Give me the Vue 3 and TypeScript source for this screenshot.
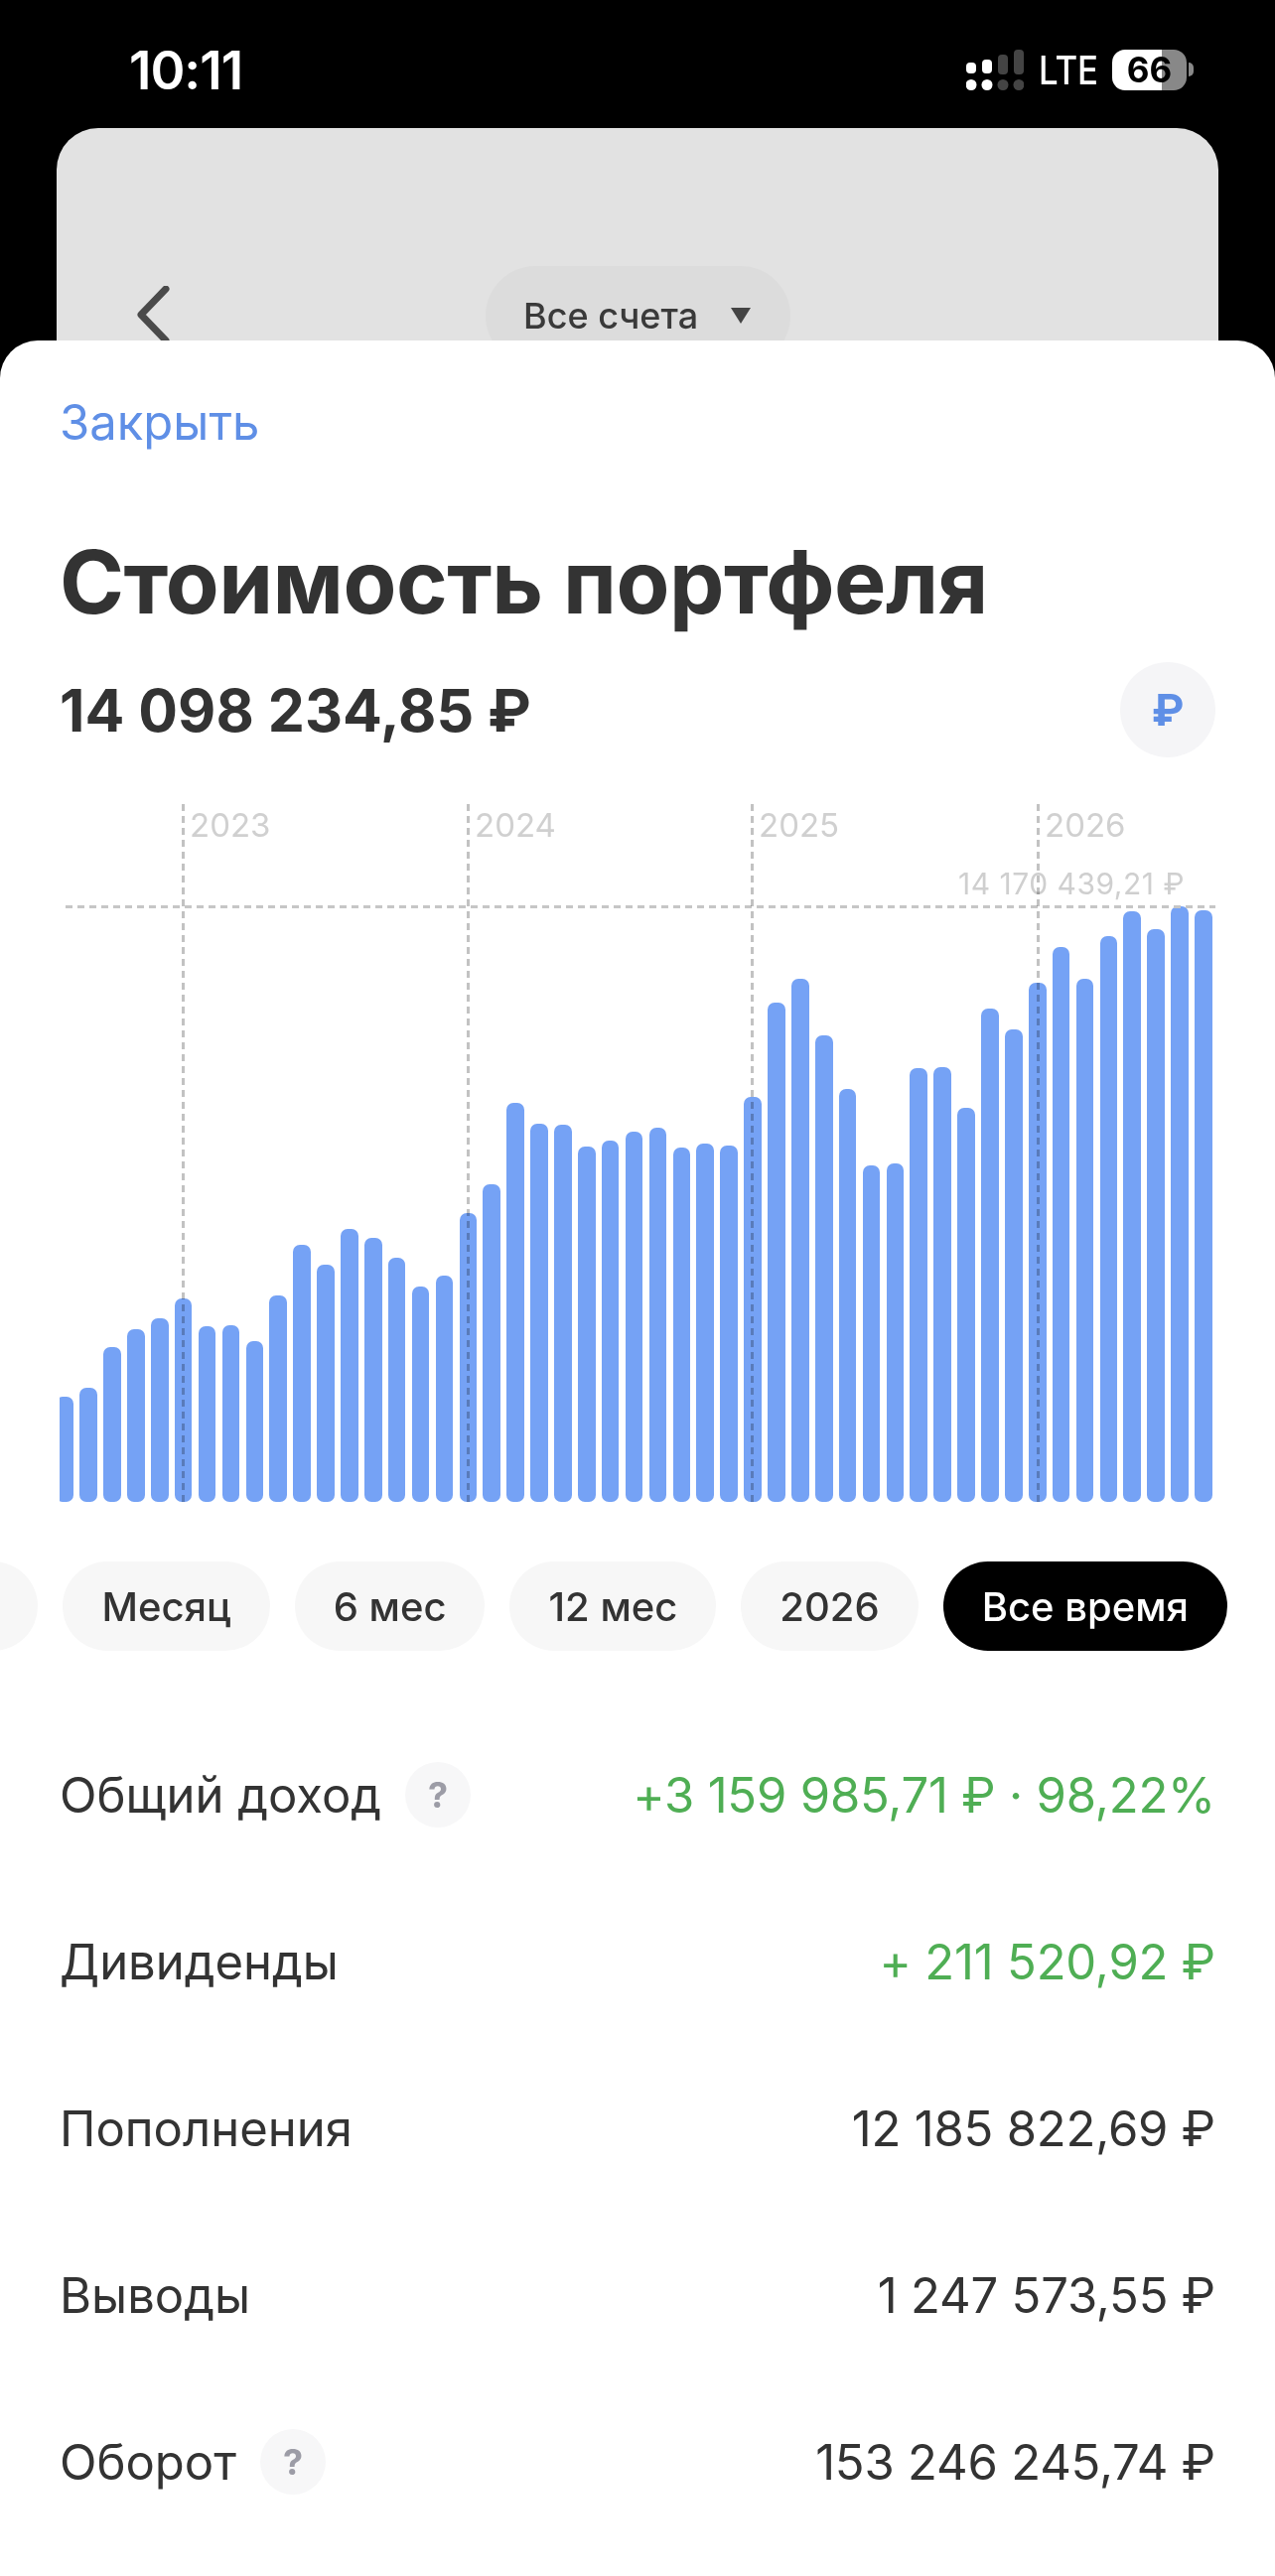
<script setup lang="ts">
const tops: number[] = [
  1322, 1302, 1213, 1172, 1148, 1106, 1167, 1165, 1198, 1098, 988, 1032, 953, 973, 1016, 1079, 1056,
  919, 856, 677, 722, 725, 773, 760, 739, 731, 775, 765, 769, 663, 456, 405, 529, 645, 814, 810, 600,
  599, 688, 470, 516, 412, 335, 405, 311, 257, 295, 246, 253
]
const bars = tops.map((t) => Math.round(((1552 - t) / 2.178) * 10) / 10)

const years = [
  { label: '2023', left: 123 },
  { label: '2024', left: 410 },
  { label: '2025', left: 696 },
  { label: '2026', left: 984 }
]

const periods = ['3 мес', 'Месяц', '6 мес', '12 мес', '2026']

const rows = [
  { label: 'Общий доход', value: '+3 159 985,71 ₽ · 98,22%', help: true, green: true },
  { label: 'Дивиденды', value: '+ 211 520,92 ₽', help: false, green: true },
  { label: 'Пополнения', value: '12 185 822,69 ₽', help: false, green: false },
  { label: 'Выводы', value: '1 247 573,55 ₽', help: false, green: false },
  { label: 'Оборот', value: '153 246 245,74 ₽', help: true, green: false }
]
</script>

<template>
  <div class="screen">
    <!-- Status bar -->
    <header class="status">
      <span class="time">10:11</span>
      <div class="status-right">
        <svg class="signal" width="58" height="41" viewBox="0 0 58 41">
          <rect x="0" y="13" width="10" height="11" rx="4" fill="#fff" />
          <rect x="16" y="10" width="10" height="14" rx="4" fill="#fff" />
          <rect x="32" y="5" width="10" height="20" rx="4" fill="#444" />
          <rect x="48" y="0" width="10" height="25" rx="4" fill="#444" />
          <circle cx="5" cy="35.5" r="5.5" fill="#fff" />
          <circle cx="21" cy="35.5" r="5.5" fill="#fff" />
          <circle cx="37" cy="35.5" r="5.5" fill="#444" />
          <circle cx="53" cy="35.5" r="5.5" fill="#444" />
        </svg>
        <span class="lte">LTE</span>
        <div class="battery">
          <span class="battery-num">66</span>
        </div>
        <span class="battery-nub"></span>
      </div>
    </header>

    <!-- Screen behind the sheet -->
    <div class="back-card">
      <svg class="back-icon" width="34" height="58" viewBox="0 0 34 58">
        <path d="M30 3 L5 29 L30 55" fill="none" stroke="#4a4a4a" stroke-width="7" stroke-linecap="round" stroke-linejoin="round" />
      </svg>
      <div class="account-pill">
        <span>Все счета</span>
        <i class="account-caret"></i>
      </div>
    </div>

    <main class="sheet">
      <a class="close">Закрыть</a>
      <h1 class="title">Стоимость портфеля</h1>

      <div class="amount-row">
        <span class="amount">14 098 234,85 ₽</span>
        <span class="currency">₽</span>
      </div>

      <!-- Chart -->
      <section class="chart">
        <div class="bars">
          <div v-for="(h, i) in bars" :key="i" class="bar" :style="{ height: h + 'px' }"></div>
        </div>
        <div class="peak-line"></div>
        <span class="peak-label">14 170 439,21 ₽</span>
        <template v-for="y in years" :key="y.label">
          <div class="year-line" :style="{ left: y.left + 'px' }"></div>
          <span class="year-label" :style="{ left: y.left + 8 + 'px' }">{{ y.label }}</span>
        </template>
      </section>

      <!-- Period filter -->
      <div class="periods">
        <button v-for="p in periods" :key="p" class="period">{{ p }}</button>
        <button class="period period-active">Все время</button>
      </div>

      <!-- Stats -->
      <div class="stats">
        <div v-for="row in rows" :key="row.label" class="stat-row">
          <div class="stat-label">
            <span>{{ row.label }}</span>
            <span v-if="row.help" class="help">?</span>
          </div>
          <span class="stat-value" :class="{ green: row.green }">{{ row.value }}</span>
        </div>
      </div>
    </main>
  </div>
</template>

<style>
html,
body {
  margin: 0;
  background: #000;
}
</style>

<style scoped>
.screen {
  position: relative;
  width: 1284px;
  height: 2595px;
  overflow: hidden;
  background: #000;
  font-family: Inter, "Liberation Sans", sans-serif;
  color: #333;
}

/* status bar */
.status {
  height: 129px;
  box-sizing: border-box;
  padding: 42px 82px 0 130px;
  display: flex;
  justify-content: space-between;
  align-items: flex-start;
  color: #fff;
}

.time {
  font-size: 53px;
  line-height: 58px;
  font-weight: 600;
  letter-spacing: -1px;
}

.status-right {
  display: flex;
  align-items: flex-start;
  margin-top: 8px;
}

.lte {
  margin-left: 15px;
  width: 57px;
  font-size: 40px;
  line-height: 41px;
  font-weight: 500;
  transform: scaleX(0.87);
  transform-origin: left center;
}

.battery {
  margin-left: 17px;
  width: 75px;
  height: 41px;
  border-radius: 13px;
  background: linear-gradient(90deg, #fff 0 50px, #888 50px);
  display: flex;
  align-items: center;
  justify-content: center;
}

.battery-num {
  color: #000;
  font-size: 35px;
  font-weight: 700;
  line-height: 41px;
}

.battery-nub {
  margin: 13px 0 0 2px;
  width: 5px;
  height: 14px;
  border-radius: 0 7px 7px 0;
  background: #888;
}

/* card behind */
.back-card {
  position: relative;
  margin: 0 57px;
  height: 300px;
  background: #e2e2e2;
  border-radius: 42px 42px 0 0;
}

.back-icon {
  position: absolute;
  left: 80px;
  top: 159px;
}

.account-pill {
  position: absolute;
  left: 432px;
  top: 139px;
  width: 307px;
  height: 100px;
  box-sizing: border-box;
  padding: 0 40px 0 38px;
  border-radius: 50px;
  background: #dcdcdc;
  display: flex;
  align-items: center;
  justify-content: space-between;
  font-size: 36px;
  font-weight: 500;
  color: #3a3a3a;
}

.account-caret {
  width: 0;
  height: 0;
  border-left: 10px solid transparent;
  border-right: 10px solid transparent;
  border-top: 16px solid #444;
}

/* sheet */
.sheet {
  position: relative;
  margin-top: -86px;
  height: 2260px;
  box-sizing: border-box;
  padding: 53px 0 0;
  background: #fff;
  border-radius: 38px 38px 0 0;
}

.close {
  display: block;
  margin-left: 60px;
  font-size: 49px;
  line-height: 60px;
  color: #5f8fe6;
}

.title {
  margin: 78px 0 0 60px;
  font-size: 88px;
  line-height: 104px;
  font-weight: 700;
  letter-spacing: -0.5px;
  color: #333;
}

.amount-row {
  margin-top: 29px;
  padding: 0 60px;
  display: flex;
  justify-content: space-between;
  align-items: center;
}

.amount {
  font-size: 59px;
  font-weight: 700;
  color: #333;
}

.currency {
  width: 96px;
  height: 96px;
  border-radius: 50%;
  background: #f5f5f7;
  display: flex;
  align-items: center;
  justify-content: center;
  font-size: 44px;
  font-weight: 700;
  color: #5f8fe6;
}

/* chart */
.chart {
  position: relative;
  margin: 47px 0 0 60px;
  width: 1170px;
  height: 703px;
  overflow: hidden;
}

.bars {
  position: absolute;
  left: -3.6px;
  bottom: 0;
  display: flex;
  align-items: flex-end;
  gap: 6.3px;
}

.bar {
  flex: none;
  width: 17.6px;
  border-radius: 7px;
  background: #75a2f5;
}

.peak-line {
  position: absolute;
  left: 6px;
  width: 1158px;
  top: 102px;
  height: 3px;
  background: repeating-linear-gradient(90deg, #c6c6c6 0 7px, transparent 7px 12px);
}

.peak-label {
  position: absolute;
  left: 905px;
  top: 62px;
  font-size: 30px;
  line-height: 36px;
  letter-spacing: 0.5px;
  color: #cfcfcf;
  white-space: nowrap;
}

.year-line {
  position: absolute;
  top: 0;
  bottom: 0;
  width: 3px;
  background: repeating-linear-gradient(180deg, #c2c2c2 0 7px, transparent 7px 12px);
  mix-blend-mode: multiply;
}

.year-label {
  position: absolute;
  top: 1px;
  font-size: 33px;
  line-height: 40px;
  color: #d0d0d0;
}

/* period filter */
.periods {
  margin-top: 60px;
  padding-right: 48px;
  display: flex;
  justify-content: flex-end;
  gap: 25px;
}

.period {
  flex: none;
  height: 90px;
  padding: 0 39px;
  border: 0;
  border-radius: 45px;
  background: #f7f7f7;
  font-family: inherit;
  font-size: 40px;
  font-weight: 500;
  color: #333;
}

.period-active {
  background: #000;
  color: #fff;
}

/* stats */
.stats {
  margin-top: 61px;
  padding: 0 60px;
}

.stat-row {
  height: 168px;
  display: flex;
  align-items: center;
  justify-content: space-between;
  font-size: 49px;
}

.stat-label {
  display: flex;
  align-items: center;
  gap: 24px;
  color: #333;
}

.help {
  width: 66px;
  height: 66px;
  border-radius: 50%;
  background: #f7f7f8;
  display: flex;
  align-items: center;
  justify-content: center;
  font-size: 36px;
  font-weight: 700;
  color: #9c9ca6;
}

.stat-value {
  color: #333;
  letter-spacing: -0.2px;
}

.green {
  color: #4fae54;
}
</style>
